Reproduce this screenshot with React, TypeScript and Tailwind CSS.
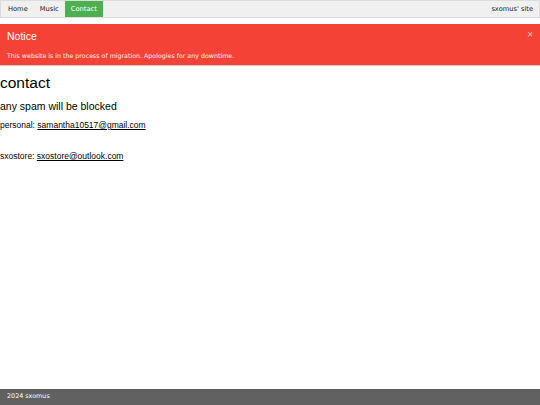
export default function App() {
  return (
    <div className="min-h-[405px] flex flex-col bg-white" style={{ fontFamily: "'Liberation Sans', Arial, sans-serif" }}>
      <nav className="h-[18px] flex items-stretch bg-[#f0f0f0] border border-[#dcdcdc] text-[6.7px] text-[#222]" style={{ fontFamily: "'DejaVu Sans', Verdana, sans-serif" }}>
        <a className="pl-[7px] pr-[6px] flex items-center">Home</a>
        <a className="px-[6px] flex items-center">Music</a>
        <a className="px-[6px] flex items-center bg-[#4caf50] text-white">Contact</a>
        <span className="ml-auto px-[6px] flex items-center">sxomus' site</span>
      </nav>

      <div className="mt-[6px] h-[41px] bg-[#f44336] text-white px-[7px] pt-[5px] relative shadow-[0_1px_1px_rgba(0,0,0,0.2)]">
        <div className="text-[10.5px] leading-[14px]">Notice</div>
        <div className="mt-[8px] text-[6.3px] text-white/90" style={{ fontFamily: "'DejaVu Sans', Verdana, sans-serif" }}>
          This website is in the process of migration. Apologies for any downtime.
        </div>
        <span className="absolute right-[7px] top-[3px] text-[10px] text-white/70">×</span>
      </div>

      <main className="flex-1 text-black">
        <h1 className="mt-[9px] text-[15.5px] leading-[18px]">contact</h1>
        <p className="mt-[8px] text-[10.5px] leading-[12px]">any spam will be blocked</p>
        <p className="mt-[8px] text-[8.5px] leading-[10px]">
          personal: <a className="underline">samantha10517@gmail.com</a>
        </p>
        <p className="mt-[21px] text-[8.5px] leading-[10px]">
          sxostore: <a className="underline">sxostore@outlook.com</a>
        </p>
      </main>

      <footer className="h-[16px] bg-[#616161] text-white text-[6.4px] px-[7px] flex items-center" style={{ fontFamily: "'DejaVu Sans', Verdana, sans-serif" }}>
        2024 sxomus
      </footer>
    </div>
  );
}
